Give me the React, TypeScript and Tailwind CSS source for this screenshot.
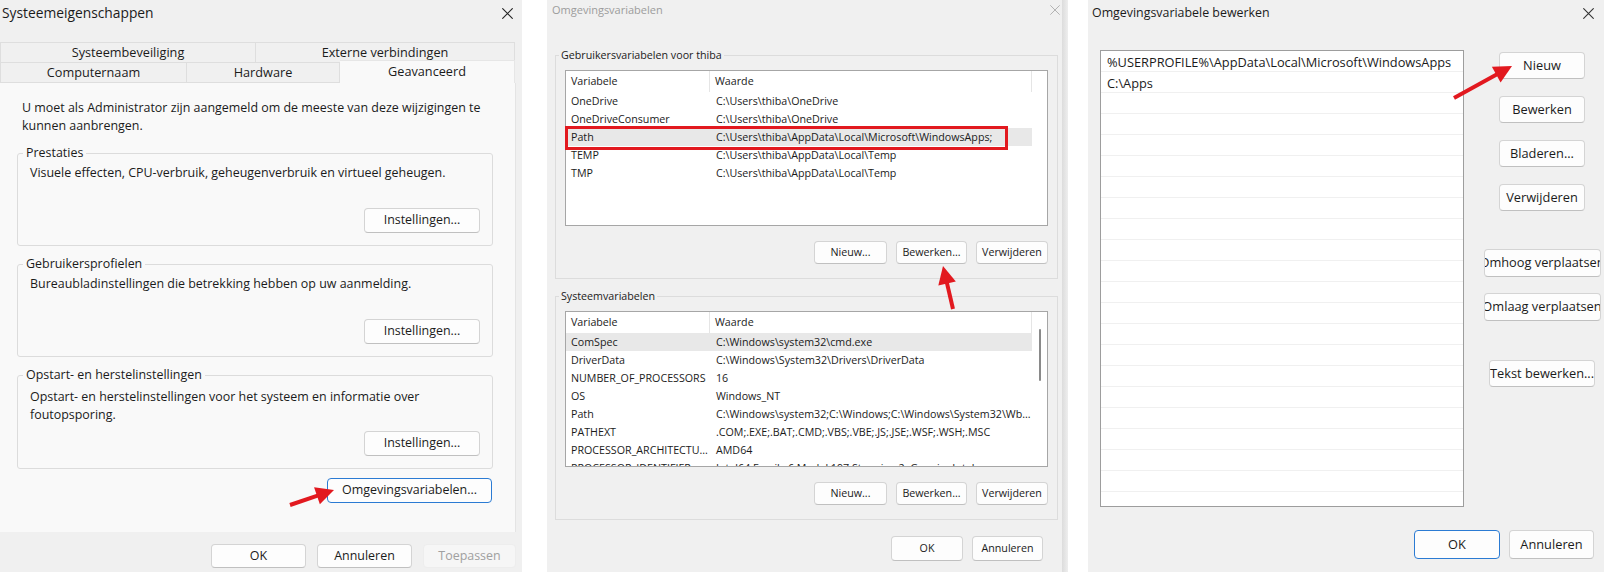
import React from "react";

const RED = "#e2191f";

function CloseX({ size, color, stroke = 1 }: { size: number; color: string; stroke?: number }) {
  return (
    <svg width={size} height={size} viewBox="0 0 10 10" className="block">
      <path d="M0.6 0.6L9.4 9.4M9.4 0.6L0.6 9.4" stroke={color} strokeWidth={stroke} strokeLinecap="round" />
    </svg>
  );
}

function Arrow({ x1, y1, x2, y2, hl = 18, hw = 9 }: { x1: number; y1: number; x2: number; y2: number; hl?: number; hw?: number }) {
  const dx = x2 - x1;
  const dy = y2 - y1;
  const len = Math.hypot(dx, dy);
  const ux = dx / len;
  const uy = dy / len;
  const bx = x2 - ux * hl;
  const by = y2 - uy * hl;
  const px = -uy;
  const py = ux;
  const pts = `${x2},${y2} ${bx + px * hw},${by + py * hw} ${bx - px * hw},${by - py * hw}`;
  return (
    <g>
      <line x1={x1} y1={y1} x2={bx + ux * 3} y2={by + uy * 3} stroke={RED} strokeWidth={4} />
      <polygon points={pts} fill={RED} />
    </g>
  );
}

type BtnProps = { children: React.ReactNode; className?: string; variant?: "normal" | "primary" | "disabled" };

function Btn({ children, className = "", variant = "normal" }: BtnProps) {
  const v =
    variant === "primary"
      ? "border-[#2b7bd3] bg-[#fdfdfd] text-[#1b1b1b]"
      : variant === "disabled"
      ? "border-[#ededed] bg-[#f6f6f6] text-[#a0a0a0]"
      : "border-[#d4d4d4] border-b-[#c0c0c0] bg-[#fdfdfd] text-[#1b1b1b]";
  return (
    <div className={`flex shrink-0 items-center justify-center overflow-hidden whitespace-nowrap rounded-[4px] border ${v} ${className}`}>
      {children}
    </div>
  );
}

function Tab({ children, className = "" }: { children: React.ReactNode; className?: string }) {
  return (
    <div className={`flex shrink-0 items-center justify-center border-t border-r border-[#dedede] bg-[#f0f0f0] ${className}`}>
      {children}
    </div>
  );
}

function Group({ title, children }: { title: string; children: React.ReactNode }) {
  return (
    <fieldset className="w-[476px] rounded-[3px] border border-[#dcdcdc]">
      <legend className="ml-[5px] px-[3px] leading-[18px]">{title}</legend>
      <div className="px-[12px] pb-[12px]">{children}</div>
    </fieldset>
  );
}

function Panel1() {
  return (
    <div className="flex h-full w-[522px] shrink-0 flex-col bg-[#f0f0f0] text-[12.45px] text-[#1b1b1b]">
      <div className="flex h-[42px] shrink-0 items-start justify-between pl-[2px] pr-[9px]">
        <span className="mt-[4px] text-[13.8px] leading-[18px]">Systeemeigenschappen</span>
        <span className="mt-[8px]">
          <CloseX size={11} color="#222" stroke={1} />
        </span>
      </div>
      <div className="w-[515px] shrink-0 text-[12.7px]">
        <div className="flex h-[20px]">
          <Tab className="h-[20px] w-[256px] border-l">Systeembeveiliging</Tab>
          <Tab className="h-[20px] w-[259px]">Externe verbindingen</Tab>
        </div>
        <div className="flex h-[21px] items-start">
          <Tab className="h-[21px] w-[187px] border-b border-l">Computernaam</Tab>
          <Tab className="h-[21px] w-[153px] border-b">Hardware</Tab>
          <div className="relative z-10 -mt-[2px] flex h-[23px] w-[175px] shrink-0 items-start justify-center border-t border-r border-[#e6e6e6] bg-[#f9f9f9] pt-[1px]">
            Geavanceerd
          </div>
        </div>
      </div>
      <div className="h-[449px] w-[516px] shrink-0 border-r border-[#e4e4e4] bg-[#f9f9f9] pl-[17px] pt-[16px]">
        <div className="pl-[5px] leading-[18px]">
          U moet als Administrator zijn aangemeld om de meeste van deze wijzigingen te
          <br />
          kunnen aanbrengen.
        </div>
        <div className="mt-[9px]">
          <Group title="Prestaties">
            <div className="mt-[2px] h-[44px] leading-[18px]">Visuele effecten, CPU-verbruik, geheugenverbruik en virtueel geheugen.</div>
            <div className="flex justify-end">
              <Btn className="h-[25px] w-[116px]">Instellingen...</Btn>
            </div>
          </Group>
        </div>
        <div className="mt-[9px]">
          <Group title="Gebruikersprofielen">
            <div className="mt-[2px] h-[44px] leading-[18px]">Bureaubladinstellingen die betrekking hebben op uw aanmelding.</div>
            <div className="flex justify-end">
              <Btn className="h-[25px] w-[116px]">Instellingen...</Btn>
            </div>
          </Group>
        </div>
        <div className="mt-[9px]">
          <Group title="Opstart- en herstelinstellingen">
            <div className="mt-[4px] h-[43px] leading-[18px]">
              Opstart- en herstelinstellingen voor het systeem en informatie over
              <br />
              foutopsporing.
            </div>
            <div className="flex justify-end">
              <Btn className="h-[25px] w-[116px]">Instellingen...</Btn>
            </div>
          </Group>
        </div>
        <div className="mt-[9px] flex w-[475px] justify-end">
          <Btn variant="primary" className="h-[25px] w-[165px]">
            Omgevingsvariabelen...
          </Btn>
        </div>
      </div>
      <div className="flex flex-1 justify-end gap-[11px] pr-[6px] pt-[12px]">
        <Btn className="h-[24px] w-[95px]">OK</Btn>
        <Btn className="h-[24px] w-[95px]">Annuleren</Btn>
        <Btn variant="disabled" className="h-[24px] w-[93px]">
          Toepassen
        </Btn>
      </div>
    </div>
  );
}

type Row = [string, string];

function VarList({ rows, selected, scroll, children }: { rows: Row[]; selected: number; scroll?: boolean; children?: React.ReactNode }) {
  return (
    <div className="relative mt-[7px] flex h-[156px] w-[483px] border border-[#a6a6a6] bg-white">
      <div className="h-full w-[466px] overflow-hidden">
        <div className="flex h-[21px]">
          <div className="flex h-full w-[144px] items-center border-r border-[#e5e5e5] pl-[5px]">Variabele</div>
          <div className="flex h-full w-[322px] items-center border-r border-[#e5e5e5] pl-[5px]">Waarde</div>
        </div>
        {rows.map((r, i) => (
          <div key={i} className={`flex h-[18px] items-center ${i === selected ? "bg-[#e8e8e8]" : ""}`}>
            <div className="w-[145px] shrink-0 overflow-hidden whitespace-nowrap pl-[5px]">{r[0]}</div>
            <div className="w-[321px] shrink-0 whitespace-nowrap pl-[5px]">{r[1]}</div>
          </div>
        ))}
      </div>
      <div className="h-full w-[15px]">
        {scroll && <div className="mx-auto mt-[17px] h-[52px] w-[2px] rounded-full bg-[#8a8a8a]" />}
      </div>
      {children}
    </div>
  );
}

const USER_ROWS: Row[] = [
  ["OneDrive", "C:\\Users\\thiba\\OneDrive"],
  ["OneDriveConsumer", "C:\\Users\\thiba\\OneDrive"],
  ["Path", "C:\\Users\\thiba\\AppData\\Local\\Microsoft\\WindowsApps;"],
  ["TEMP", "C:\\Users\\thiba\\AppData\\Local\\Temp"],
  ["TMP", "C:\\Users\\thiba\\AppData\\Local\\Temp"],
];

const SYS_ROWS: Row[] = [
  ["ComSpec", "C:\\Windows\\system32\\cmd.exe"],
  ["DriverData", "C:\\Windows\\System32\\Drivers\\DriverData"],
  ["NUMBER_OF_PROCESSORS", "16"],
  ["OS", "Windows_NT"],
  ["Path", "C:\\Windows\\system32;C:\\Windows;C:\\Windows\\System32\\Wb..."],
  ["PATHEXT", ".COM;.EXE;.BAT;.CMD;.VBS;.VBE;.JS;.JSE;.WSF;.WSH;.MSC"],
  ["PROCESSOR_ARCHITECTU...", "AMD64"],
  ["PROCESSOR_IDENTIFIER", "Intel64 Family 6 Model 197 Stepping 2, GenuineIntel"],
];

function ListButtons() {
  return (
    <div className="mt-[15px] flex justify-end gap-[9px]">
      <Btn className="h-[23px] w-[73px]">Nieuw...</Btn>
      <Btn className="h-[23px] w-[71px]">Bewerken...</Btn>
      <Btn className="h-[23px] w-[72px]">Verwijderen</Btn>
    </div>
  );
}

function Panel2() {
  return (
    <div className="flex h-full w-[515px] shrink-0 flex-col bg-[#f0f0f0] text-[10.7px] text-[#1b1b1b]">
      <div className="flex h-[20px] shrink-0 items-center justify-between pl-[5px] pr-[2px]">
        <span className="text-[11px] text-[#9c9c9c]">Omgevingsvariabelen</span>
        <CloseX size={10} color="#b3b3b3" stroke={1} />
      </div>
      <fieldset className="ml-[8px] mt-[27px] w-[503px] border border-[#dcdcdc]">
        <legend className="ml-[3px] px-[2px] leading-[16px]">Gebruikersvariabelen voor thiba</legend>
        <div className="px-[9px] pb-[14px]">
          <VarList rows={USER_ROWS} selected={2}>
            <div className="absolute left-[-1px] top-[55px] h-[24px] w-[443px] border-[3px] border-[#e2191f]" />
          </VarList>
          <ListButtons />
        </div>
      </fieldset>
      <fieldset className="ml-[8px] mt-[9px] w-[503px] border border-[#dcdcdc]">
        <legend className="ml-[3px] px-[2px] leading-[16px]">Systeemvariabelen</legend>
        <div className="px-[9px] pb-[14px]">
          <VarList rows={SYS_ROWS} selected={0} scroll />
          <ListButtons />
        </div>
      </fieldset>
      <div className="mt-[16px] flex justify-end gap-[9px] pr-[19px]">
        <Btn className="h-[25px] w-[72px]">OK</Btn>
        <Btn className="h-[25px] w-[71px]">Annuleren</Btn>
      </div>
    </div>
  );
}

const EDIT_ROWS = [
  "%USERPROFILE%\\AppData\\Local\\Microsoft\\WindowsApps",
  "C:\\Apps",
  ...Array.from({ length: 20 }, () => ""),
];

function Panel3() {
  return (
    <div className="flex h-full w-[516px] shrink-0 flex-col overflow-hidden bg-[#f0f0f0] text-[12.8px] text-[#1b1b1b]">
      <div className="flex h-[26px] shrink-0 items-center justify-between pl-[4px] pr-[10px]">
        <span className="text-[12.4px]">Omgevingsvariabele bewerken</span>
        <CloseX size={11} color="#333" stroke={1} />
      </div>
      <div className="mt-[24px] flex">
        <div className="ml-[12px] h-[457px] w-[364px] shrink-0 overflow-hidden border border-[#9d9d9d] bg-white">
          {EDIT_ROWS.map((t, i) => (
            <div key={i} className="flex h-[21px] items-center whitespace-nowrap border-b border-[#f0f0f0] pl-[6px] pt-[3px]">
              {t}
            </div>
          ))}
        </div>
        <div className="flex w-[140px] shrink-0 flex-col items-center pl-[16px] pt-[2px]">
          <Btn className="h-[27px] w-[86px]">Nieuw</Btn>
          <Btn className="mt-[17px] h-[27px] w-[86px]">Bewerken</Btn>
          <Btn className="mt-[17px] h-[27px] w-[86px]">Bladeren...</Btn>
          <Btn className="mt-[17px] h-[27px] w-[86px]">Verwijderen</Btn>
          <Btn className="mt-[38px] h-[28px] w-[117px]">Omhoog verplaatsen</Btn>
          <Btn className="mt-[16px] h-[28px] w-[117px]">Omlaag verplaatsen</Btn>
          <Btn className="mt-[39px] h-[27px] w-[106px]">Tekst bewerken...</Btn>
        </div>
      </div>
      <div className="mt-[23px] flex justify-end gap-[9px] pr-[10px]">
        <Btn variant="primary" className="h-[29px] w-[86px]">
          OK
        </Btn>
        <Btn className="h-[29px] w-[85px]">Annuleren</Btn>
      </div>
    </div>
  );
}

export default function App() {
  return (
    <div className="relative flex h-[572px] w-[1604px] overflow-hidden bg-white font-['Open_Sans',sans-serif]">
      <Panel1 />
      <div className="w-[25px] shrink-0 bg-white" />
      <Panel2 />
      <div className="w-[6px] shrink-0 bg-gradient-to-r from-[#dcdcdc] to-[#eeeeee]" />
      <div className="w-[20px] shrink-0 bg-white" />
      <Panel3 />
      <svg className="pointer-events-none absolute inset-0" width={1604} height={572}>
        <Arrow x1={290} y1={505} x2={334} y2={490} />
        <Arrow x1={953} y1={309} x2={943} y2={266} />
        <Arrow x1={1454} y1={98} x2={1512} y2={66} />
      </svg>
    </div>
  );
}
